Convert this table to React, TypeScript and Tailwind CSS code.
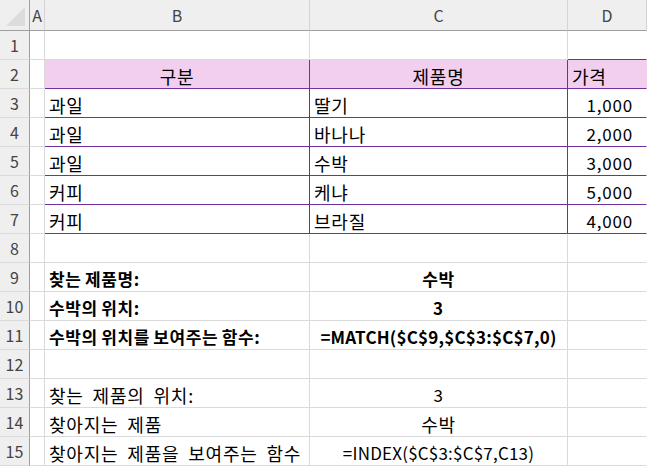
import { ReactNode } from 'react'

type Align = 'left' | 'center' | 'right'

type CellSpec = {
  text?: string
  align?: Align
  bold?: boolean
}

const PURPLE = 'border-[#7030a0]'
const GRID = 'border-[#dadada]'

const rows: Array<{ b?: CellSpec; c?: CellSpec; d?: CellSpec }> = [
  {},
  {
    b: { text: '구분', align: 'center' },
    c: { text: '제품명', align: 'center' },
    d: { text: '가격' },
  },
  { b: { text: '과일' }, c: { text: '딸기' }, d: { text: '1,000', align: 'right' } },
  { b: { text: '과일' }, c: { text: '바나나' }, d: { text: '2,000', align: 'right' } },
  { b: { text: '과일' }, c: { text: '수박' }, d: { text: '3,000', align: 'right' } },
  { b: { text: '커피' }, c: { text: '케냐' }, d: { text: '5,000', align: 'right' } },
  { b: { text: '커피' }, c: { text: '브라질' }, d: { text: '4,000', align: 'right' } },
  {},
  {
    b: { text: '찾는 제품명:', bold: true },
    c: { text: '수박', align: 'center', bold: true },
  },
  {
    b: { text: '수박의 위치:', bold: true },
    c: { text: '3', align: 'center', bold: true },
  },
  {
    b: { text: '수박의 위치를 보여주는 함수:', bold: true },
    c: { text: '=MATCH($C$9,$C$3:$C$7,0)', align: 'center', bold: true },
  },
  {},
  { b: { text: '찾는 제품의 위치:' }, c: { text: '3', align: 'center' } },
  { b: { text: '찾아지는 제품' }, c: { text: '수박', align: 'center' } },
  {
    b: { text: '찾아지는 제품을 보여주는 함수' },
    c: { text: '=INDEX($C$3:$C$7,C13)', align: 'center' },
  },
]

// malgun gothic runs wider than noto, so size and space the text a bit differently
const textStyle = (text?: string, bold?: boolean) => {
  if (!text) return 'text-[17px]'
  if (/[가-힣]/.test(text)) {
    return bold
      ? 'text-[17px] tracking-[0.6px] [word-spacing:-1px]'
      : 'text-[18px] tracking-[0.8px] [word-spacing:4px]'
  }
  if (/^[0-9,]+$/.test(text)) return 'text-[17px] tracking-[0.8px]'
  return 'text-[17px] tracking-[0.2px]'
}

const Cell = ({
  spec,
  right,
  bottom,
  fill,
}: {
  spec?: CellSpec
  right: string
  bottom: string
  fill?: boolean
}) => {
  const align = spec?.align || 'left'
  return (
    <div
      className={`flex h-[29px] items-end overflow-visible whitespace-nowrap border-r border-b leading-[24px] text-black ${right} ${bottom} ${
        fill ? 'bg-[#f2cfee]' : 'bg-white'
      } ${align === 'center' ? 'justify-center' : ''} ${
        align === 'right' ? 'justify-end pr-[13px]' : ''
      } ${align === 'left' ? 'pl-[4px]' : ''} ${spec?.bold ? 'font-bold' : ''} ${textStyle(
        spec?.text,
        spec?.bold,
      )}`}
    >
      {spec?.text}
    </div>
  )
}

const ColHead = ({ children }: { children?: ReactNode }) => (
  <div className="flex h-[31px] items-center justify-center border-r border-b border-r-[#d4d4d4] border-b-[#9f9f9f] bg-[#efefef] text-[16px] text-[#444]">
    {children}
  </div>
)

const App = () => {
  return (
    <div
      className="h-[470px] w-[647px] overflow-hidden bg-white"
      style={{ fontFamily: '"Noto Sans CJK KR", "Noto Sans", sans-serif' }}
    >
      <div className="grid grid-cols-[30px_15px_265px_258px_1fr]">
        <div className="flex h-[31px] items-end justify-end border-r border-b border-r-[#9f9f9f] border-b-[#9f9f9f] bg-[#efefef] p-[3px]">
          <svg width="21" height="21" viewBox="0 0 21 21">
            <polygon points="1,20 20,20 20,1" fill="#dcdcdc" />
          </svg>
        </div>
        <ColHead>A</ColHead>
        <ColHead>B</ColHead>
        <ColHead>C</ColHead>
        <ColHead>D</ColHead>

        {rows.map((row, i) => {
          const n = i + 1
          const inTable = n >= 2 && n <= 7
          const bottomColor = n <= 7 ? PURPLE : GRID
          return [
            <div
              key={`h${n}`}
              className="flex h-[29px] items-center justify-center border-r border-b border-r-[#9f9f9f] border-b-[#dadada] bg-[#efefef] text-[16px] text-[#444]"
            >
              {n}
            </div>,
            <Cell
              key={`a${n}`}
              right={inTable ? PURPLE : GRID}
              bottom={GRID}
            />,
            <Cell
              key={`b${n}`}
              spec={row.b}
              right={inTable ? PURPLE : GRID}
              bottom={bottomColor}
              fill={n === 2}
            />,
            <Cell
              key={`c${n}`}
              spec={row.c}
              right={inTable ? PURPLE : GRID}
              bottom={bottomColor}
              fill={n === 2}
            />,
            <Cell
              key={`d${n}`}
              spec={row.d}
              right="border-r-transparent"
              bottom={bottomColor}
              fill={n === 2}
            />,
          ]
        })}
      </div>
    </div>
  )
}

export default App
